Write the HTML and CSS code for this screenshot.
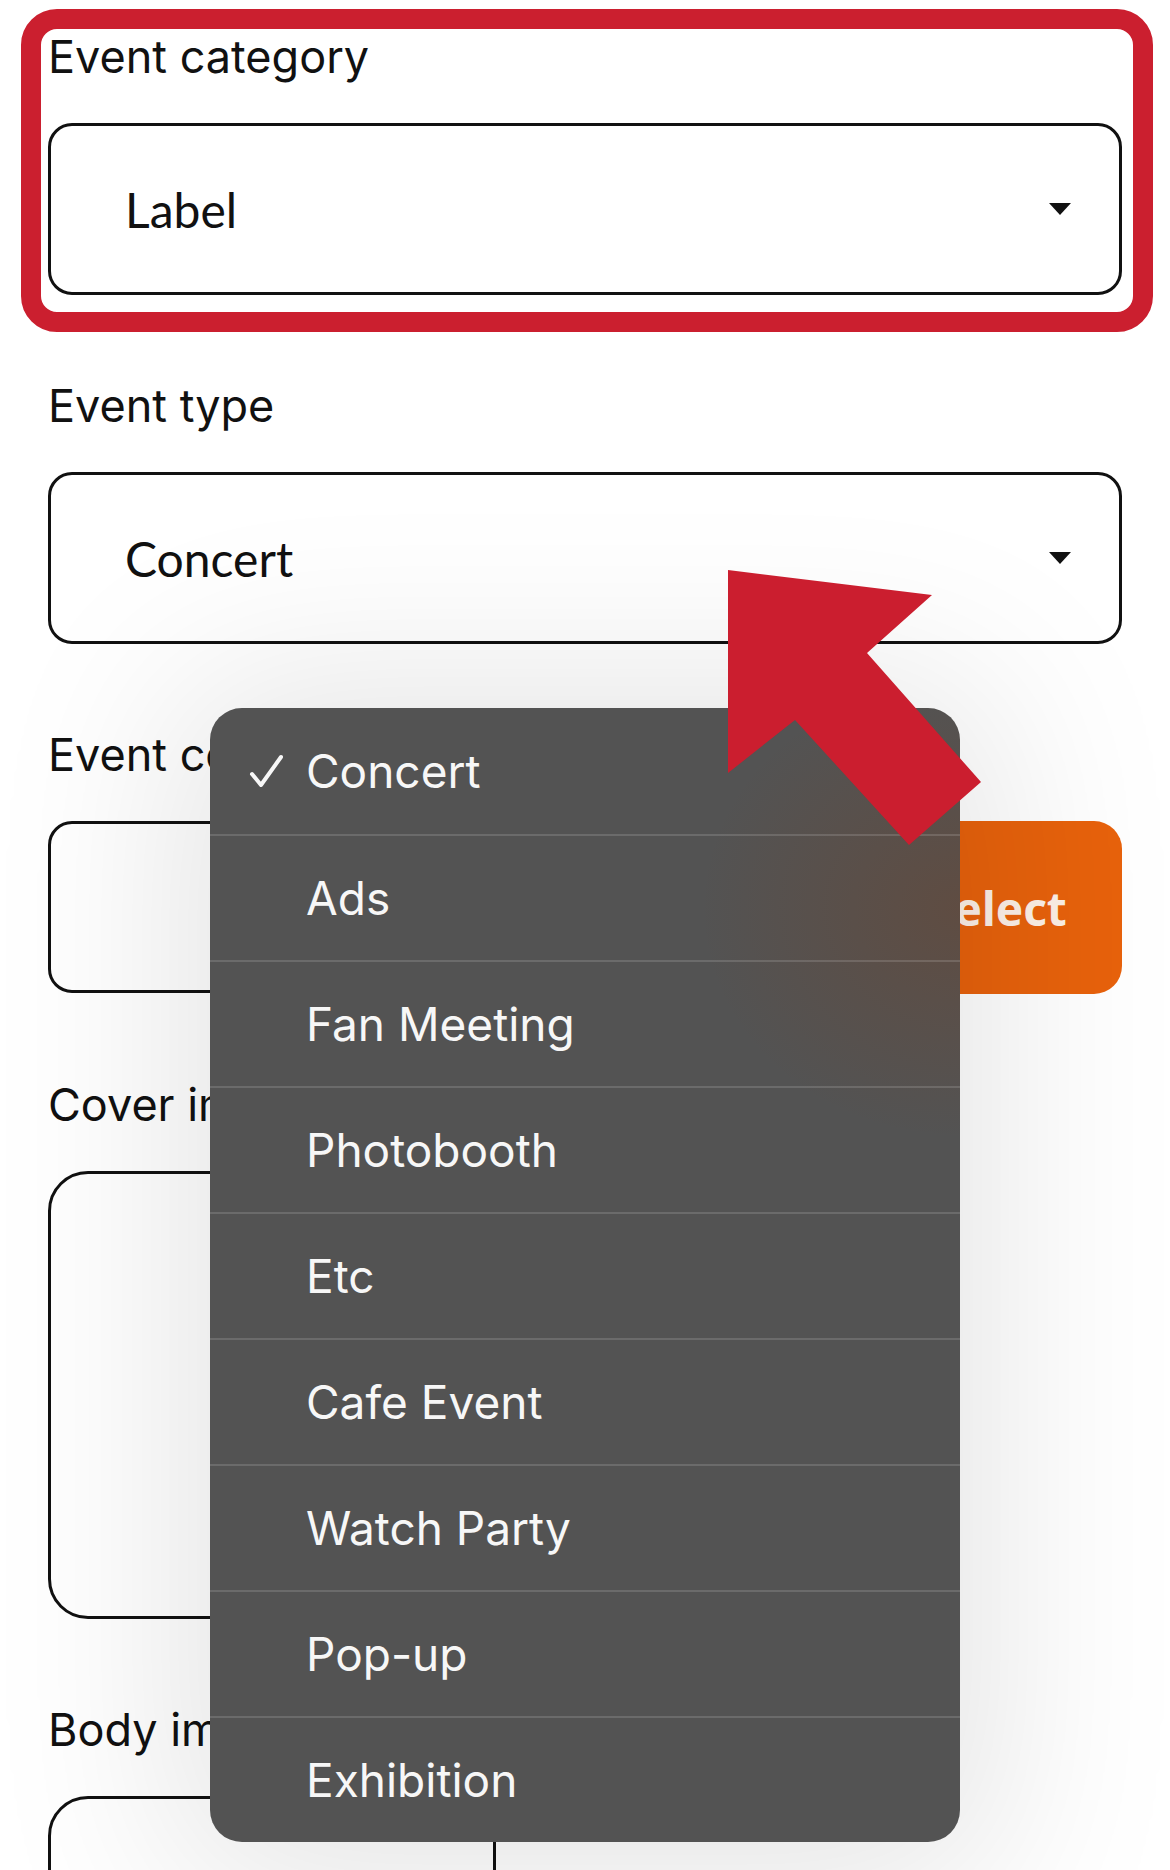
FILE: index.html
```html
<!DOCTYPE html>
<html lang="en">
<head>
    <meta charset="UTF-8">
    <meta name="viewport" content="width=device-width, initial-scale=1.0">
    <title>Create Event</title>
    <link rel="stylesheet" href="styles.css">
</head>
<body>
    <div class="form">
        <div class="field-group">
            <label class="field-label">Event category</label>
            <div class="select">
                <span>Label</span>
                <span class="caret"></span>
            </div>
        </div>
        <div class="field-group">
            <label class="field-label">Event type</label>
            <div class="select">
                <span>Concert</span>
                <span class="caret"></span>
            </div>
        </div>
        <div class="field-group">
            <label class="field-label">Event country</label>
            <div class="row">
                <div class="input"></div>
                <button class="select-btn">Select</button>
            </div>
        </div>
        <div class="field-group">
            <label class="field-label">Cover image</label>
            <div class="upload"></div>
        </div>
        <div class="field-group">
            <label class="field-label">Body image</label>
            <div class="upload"></div>
        </div>
    </div>

    <!-- event type picker, opened -->
    <ul class="menu">
        <li class="menu-item"><svg class="check" width="36" height="36" viewBox="0 0 36 36"><polyline points="3,20 12,31 32,3" /></svg>Concert</li>
        <li class="menu-item">Ads</li>
        <li class="menu-item">Fan Meeting</li>
        <li class="menu-item">Photobooth</li>
        <li class="menu-item">Etc</li>
        <li class="menu-item">Cafe Event</li>
        <li class="menu-item">Watch Party</li>
        <li class="menu-item">Pop-up</li>
        <li class="menu-item">Exhibition</li>
    </ul>

    <!-- annotation marks -->
    <div class="highlight"></div>
    <svg class="pointer" width="1170" height="1870" viewBox="0 0 1170 1870">
        <polygon points="728,570 932,595 867,653 981,782 909,845 795,720 728,773" />
    </svg>
</body>
</html>
```

FILE: styles.css
```css
* {
    box-sizing: border-box;
}
html, body {
    margin: 0;
    height: 100%;
    overflow: hidden;
}
body {
    position: relative;
    background-color: #fff;
    font-family: Inter, "Liberation Sans", sans-serif;
    color: #111;
}
.form {
    padding: 31px 48px 0;
}
.field-group {
    margin-bottom: 85px;
}
.field-label {
    display: block;
    font-size: 45px;
    line-height: 52px;
    margin-bottom: 40px;
}
.select {
    display: flex;
    align-items: center;
    justify-content: space-between;
    height: 172px;
    padding: 0 48px 0 74px;
    border: 3px solid #111;
    border-radius: 24px;
    font-family: Lato, "Open Sans", sans-serif;
    font-size: 48px;
}
.caret {
    width: 0;
    height: 0;
    border-left: 11.5px solid transparent;
    border-right: 11.5px solid transparent;
    border-top: 12px solid #111;
}
.row {
    display: flex;
    gap: 16px;
}
.input {
    flex: 1;
    height: 172px;
    border: 3px solid #111;
    border-radius: 24px;
}
.select-btn {
    width: 248px;
    height: 173px;
    border: none;
    border-radius: 28px;
    background-color: #e8620c;
    color: #fdf1e8;
    font-family: "Noto Sans", sans-serif;
    font-weight: bold;
    font-size: 46px;
}
.upload {
    width: 448px;
    height: 448px;
    border: 3px solid #111;
    border-radius: 40px;
}
.menu {
    position: absolute;
    left: 210px;
    top: 708px;
    width: 750px;
    margin: 0;
    padding: 0;
    list-style: none;
    background: radial-gradient(ellipse 260px 230px at 100% 200px, rgba(120, 62, 30, 0.32), rgba(120, 62, 30, 0) 100%), #535353;
    border-radius: 32px;
    overflow: hidden;
    box-shadow: 0 10px 190px 40px rgba(0, 0, 0, 0.1);
}
.menu-item {
    position: relative;
    display: flex;
    align-items: center;
    height: 126px;
    padding-left: 96px;
    border-top: 2px solid rgba(255, 255, 255, 0.14);
    color: #f7f7f7;
    font-size: 46px;
}
.menu-item:first-child {
    border-top: none;
}
.check {
    position: absolute;
    left: 39px;
    top: 46px;
    fill: none;
    stroke: #f7f7f7;
    stroke-width: 4;
    stroke-linecap: round;
    stroke-linejoin: round;
}
.highlight {
    position: absolute;
    left: 21px;
    top: 9px;
    width: 1132px;
    height: 323px;
    border: 20px solid #cb1f2f;
    border-radius: 36px;
}
.pointer {
    position: absolute;
    left: 0;
    top: 0;
    fill: #cb1e2f;
}
```
